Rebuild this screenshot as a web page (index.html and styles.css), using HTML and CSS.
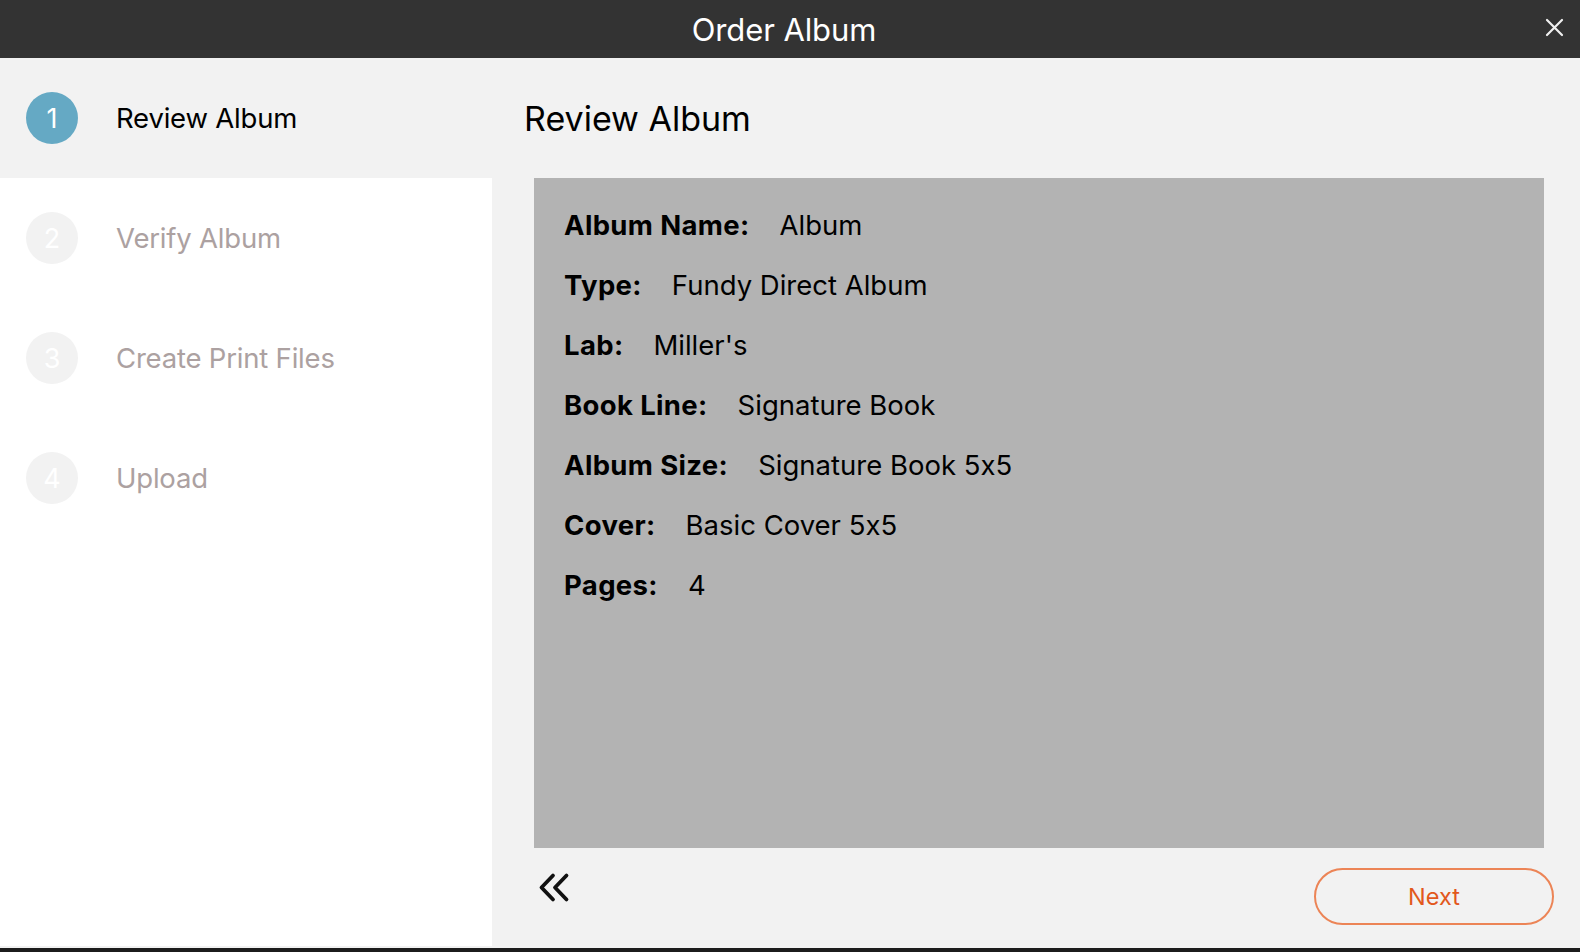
FILE: index.html
```html
<!DOCTYPE html>
<html lang="en">
<head>
  <meta charset="UTF-8">
  <meta name="viewport" content="width=device-width, initial-scale=1.0">
  <title>Order Album</title>
  <link rel="stylesheet" href="styles.css">
</head>
<body>
  <div class="window">
    <header class="title-bar">
      <h1>Order Album</h1>
      <button class="close-btn" aria-label="Close">
        <svg width="19" height="19" viewBox="0 0 19 19">
          <path d="M2 2 L17 17 M17 2 L2 17" stroke="#f0f0f0" stroke-width="2.2" stroke-linecap="round" fill="none"/>
        </svg>
      </button>
    </header>

    <div class="content">
      <aside class="steps">
        <div class="step active">
          <span class="step-num">1</span>
          <span class="step-label">Review Album</span>
        </div>
        <div class="step">
          <span class="step-num">2</span>
          <span class="step-label">Verify Album</span>
        </div>
        <div class="step">
          <span class="step-num">3</span>
          <span class="step-label">Create Print Files</span>
        </div>
        <div class="step">
          <span class="step-num">4</span>
          <span class="step-label">Upload</span>
        </div>
      </aside>

      <main class="main">
        <h2 class="page-title">Review Album</h2>

        <div class="summary">
          <div class="row"><span class="label">Album Name:</span><span>Album</span></div>
          <div class="row"><span class="label">Type:</span><span>Fundy Direct Album</span></div>
          <div class="row"><span class="label">Lab:</span><span>Miller's</span></div>
          <div class="row"><span class="label">Book Line:</span><span>Signature Book</span></div>
          <div class="row"><span class="label">Album Size:</span><span>Signature Book 5x5</span></div>
          <div class="row"><span class="label">Cover:</span><span>Basic Cover 5x5</span></div>
          <div class="row"><span class="label">Pages:</span><span>4</span></div>
        </div>

        <div class="actions">
          <button class="back-btn" aria-label="Back">
            <svg width="32" height="31" viewBox="0 0 32 31">
              <path d="M15 3.5 L3.5 15.5 L15 27.5 M28.5 3.5 L17 15.5 L28.5 27.5" stroke="#111" stroke-width="3.8" stroke-linecap="round" stroke-linejoin="round" fill="none"/>
            </svg>
          </button>
          <button class="next-btn">Next</button>
        </div>
      </main>
    </div>

    <div class="dock"></div>
  </div>
</body>
</html>
```

FILE: styles.css
```css
body {
  margin: 0;
  font-family: Inter, "Noto Sans", sans-serif;
  font-feature-settings: "calt" 0;
  background-color: #f2f2f2;
  color: #000;
}

.window {
  display: flex;
  flex-direction: column;
  height: 952px;
}

.title-bar {
  height: 58px;
  background-color: #333;
  display: flex;
  align-items: center;
  justify-content: center;
  position: relative;
  padding-right: 12px;
}

.title-bar h1 {
  margin: 0;
  color: #fff;
  font-size: 31px;
  font-weight: 400;
  letter-spacing: -0.1px;
}

.close-btn {
  position: absolute;
  right: 16px;
  top: 18px;
  width: 19px;
  height: 19px;
  padding: 0;
  border: none;
  background: none;
  cursor: pointer;
}

.close-btn svg {
  display: block;
}

.content {
  flex: 1;
  display: flex;
}

.steps {
  width: 492px;
  background-color: #fff;
  margin-bottom: 2px;
}

.step {
  height: 120px;
  display: flex;
  align-items: center;
  padding-left: 26px;
  gap: 38px;
}

.step.active {
  background-color: #f2f2f2;
}

.step-num {
  width: 52px;
  height: 52px;
  border-radius: 50%;
  background-color: #f2f2f2;
  color: #fff;
  font-size: 27px;
  display: flex;
  align-items: center;
  justify-content: center;
}

.step.active .step-num {
  background-color: #65a9c4;
}

.step-label {
  font-size: 27.5px;
  color: #aca1a1;
  letter-spacing: -0.2px;
}

.step.active .step-label {
  color: #000;
}

.main {
  flex: 1;
  display: flex;
  flex-direction: column;
}

.page-title {
  margin: 0;
  height: 120px;
  display: flex;
  align-items: center;
  padding-left: 32px;
  font-size: 34px;
  font-weight: 400;
}

.summary {
  margin-left: 42px;
  margin-right: 36px;
  height: 670px;
  box-sizing: border-box;
  background-color: #b3b3b3;
  padding: 17px 30px;
}

.row {
  display: flex;
  gap: 30px;
  height: 60px;
  align-items: center;
  font-size: 27.5px;
}

.label {
  font-weight: 700;
  letter-spacing: 0.35px;
}

.actions {
  flex: 1;
  display: flex;
  justify-content: space-between;
  align-items: flex-start;
  padding-left: 46px;
  padding-right: 26px;
}

.back-btn {
  margin-top: 24px;
  padding: 0;
  border: none;
  background: none;
  cursor: pointer;
}

.back-btn svg {
  display: block;
}

.next-btn {
  margin-top: 20px;
  width: 240px;
  height: 57px;
  border: 2px solid #ec8456;
  border-radius: 29px;
  background: none;
  color: #e2581c;
  font-family: Inter, "Noto Sans", sans-serif;
  font-feature-settings: "calt" 0;
  font-size: 23.5px;
  cursor: pointer;
}

.dock {
  height: 4px;
  background-color: #1c1c1c;
}
```
